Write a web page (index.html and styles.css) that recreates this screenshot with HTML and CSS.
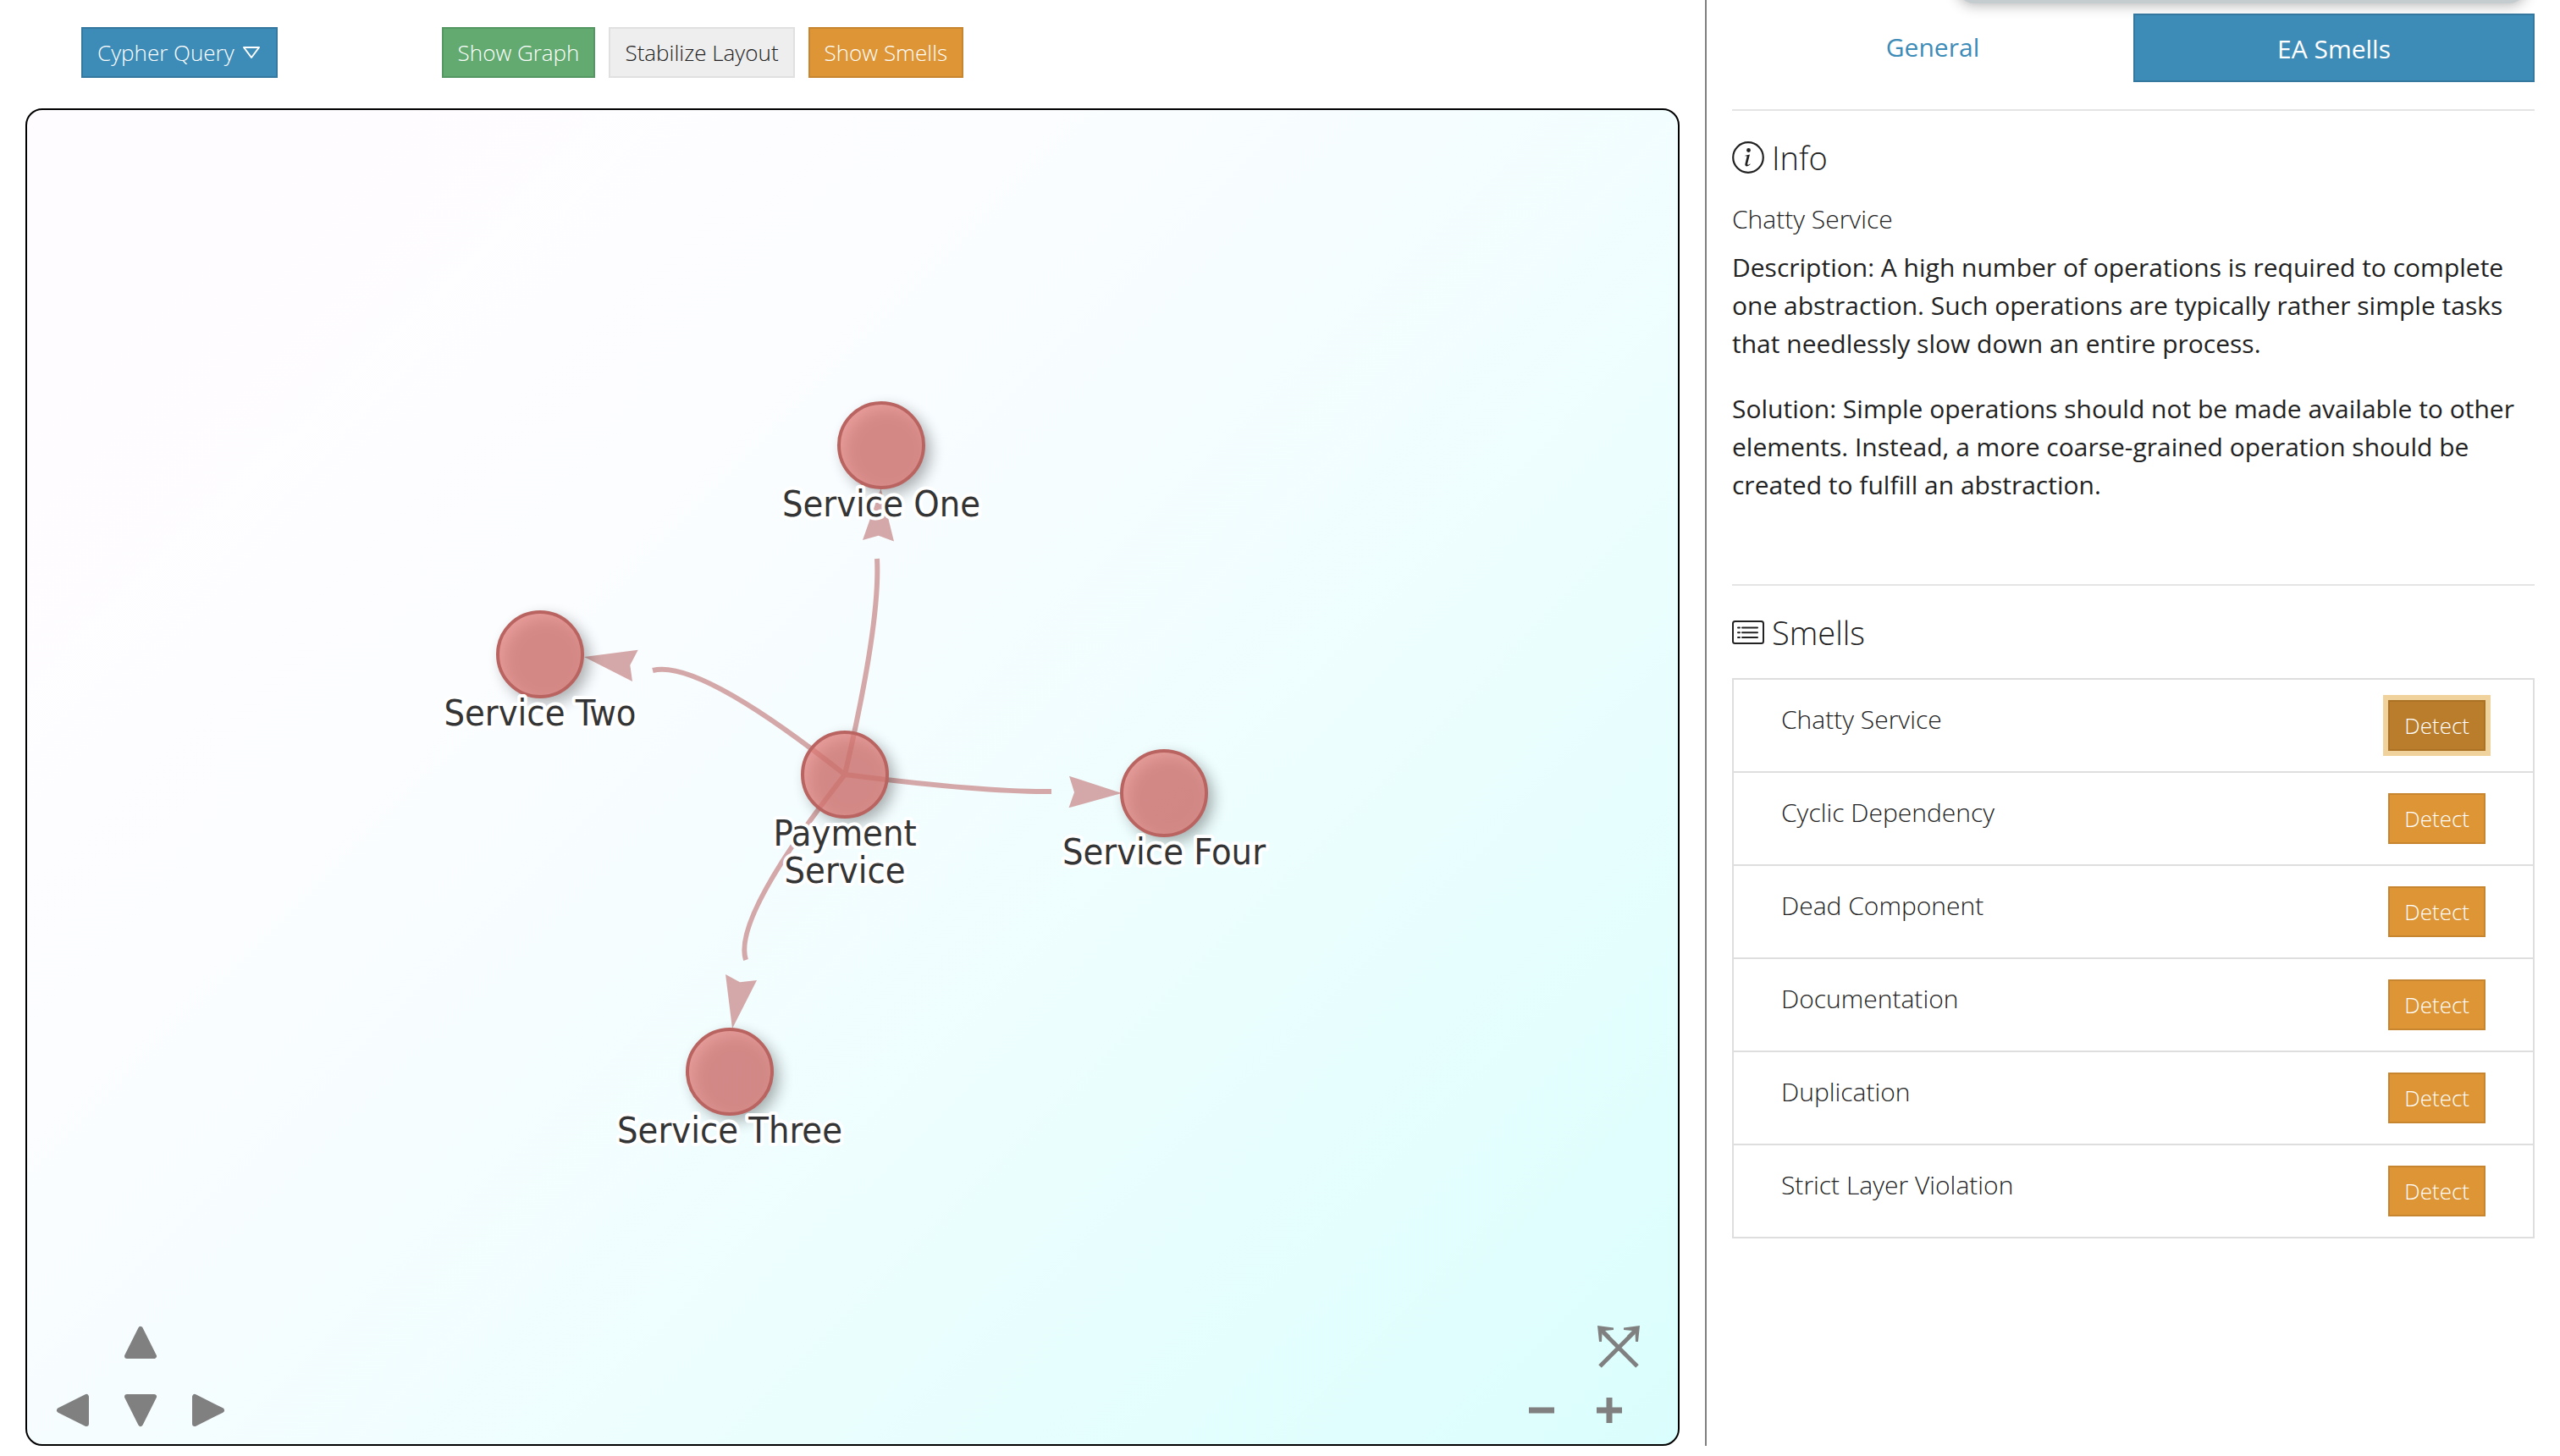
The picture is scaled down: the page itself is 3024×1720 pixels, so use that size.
FILE: index.html
```html
<!DOCTYPE html>
<html lang="en">
<head>
<meta charset="utf-8">
<title>EA Smells</title>
<link rel="stylesheet" href="styles.css">
</head>
<body>
<div class="layout">
  <main class="workspace">
    <div class="toolbar">
      <button class="btn btn-primary" type="button">Cypher Query
        <svg class="caret" viewBox="0 0 20 18" aria-hidden="true"><path d="M1 3h18L10 15z" fill="none" stroke="currentColor" stroke-width="2" stroke-linejoin="round"/></svg>
      </button>
      <div class="toolbar-group">
        <button class="btn btn-success" type="button">Show Graph</button>
        <button class="btn btn-light" type="button">Stabilize Layout</button>
        <button class="btn btn-warning" type="button">Show Smells</button>
      </div>
    </div>
    <section class="graph" aria-label="Service graph">
      <svg class="network" viewBox="32 130 1950 1576">
        <defs>
          <filter id="soft" x="-50%" y="-50%" width="200%" height="200%"><feGaussianBlur stdDeviation="9"/></filter>
          <g id="node">
            <circle class="node-shadow" cx="7" cy="7" r="51" filter="url(#soft)"/>
            <circle class="node-body" r="50"/>
          </g>
        </defs>
        <g class="edges">
          <path d="M998 915Q1040 735 1036 660"/>
          <path d="M998 915Q825 778 771 792"/>
          <path d="M998 915Q865 1085 881 1134"/>
          <path d="M998 915Q1160 936 1242 935"/>
        </g>
        <g class="arrows">
          <path d="M1040.500 577L1056 639.500L1037.700 632.700L1019 638z"/>
          <path d="M690 776L753.700 767.700L744.300 785.700L747 805z"/>
          <path d="M865 1215L857 1151L874 1160.300L894 1158z"/>
          <path d="M1325 937L1263 916.700L1269 936L1262.500 954.300z"/>
        </g>
        <use href="#node" x="998" y="915"/>
        <use href="#node" x="1041" y="526"/>
        <use href="#node" x="638" y="773"/>
        <use href="#node" x="862" y="1266"/>
        <use href="#node" x="1375" y="937"/>
        <g class="labels">
          <text x="1041" y="610">Service One</text>
          <text x="638" y="857">Service Two</text>
          <text x="862" y="1350">Service Three</text>
          <text x="1375" y="1021">Service Four</text>
          <text x="998" y="999">Payment<tspan x="998" dy="44">Service</tspan></text>
        </g>
      </svg>
      <div class="pan">
        <button class="nav nav-up" type="button" aria-label="Move up"><svg viewBox="0 0 40 40"><path d="M20 4L36 36H4z"/></svg></button>
        <button class="nav" type="button" aria-label="Move left"><svg viewBox="0 0 40 40"><path d="M4 20L36 4V36z"/></svg></button>
        <button class="nav" type="button" aria-label="Move down"><svg viewBox="0 0 40 40"><path d="M20 36L36 4H4z"/></svg></button>
        <button class="nav" type="button" aria-label="Move right"><svg viewBox="0 0 40 40"><path d="M36 20L4 4V36z"/></svg></button>
      </div>
      <div class="zoom">
        <button class="nav nav-fit" type="button" aria-label="Fit graph"><svg viewBox="0 0 50 50"><path class="shaft" d="M3 48L43 8M47 48L7 8"/><path class="head" d="M0 0L19 2.500V5L9 6L15 12L12 15L5.500 9L5 19H2zM50 0L31 2.500V5L41 6L35 12L38 15L44.500 9L45 19H48z"/></svg></button>
        <button class="nav" type="button" aria-label="Zoom out"><svg viewBox="0 0 40 40"><path class="flat" d="M5 16.500h30v7H5z"/></svg></button>
        <button class="nav" type="button" aria-label="Zoom in"><svg viewBox="0 0 40 40"><path class="flat" d="M5 16.500h11.500V5h7v11.500H35v7H23.500V35h-7V23.500H5z"/></svg></button>
      </div>
    </section>
  </main>
  <aside class="panel">
    <div class="popover-edge"></div>
    <nav class="tabs">
      <a class="tab" href="#general">General</a>
      <a class="tab tab-active" href="#smells">EA Smells</a>
    </nav>
    <section class="block info" id="general">
      <h2 class="heading"><svg class="icon" viewBox="0 0 38 38" aria-hidden="true"><circle cx="19" cy="19" r="17.800" fill="none" stroke="currentColor" stroke-width="2.200"/><circle cx="19.500" cy="10.500" r="2.400" fill="currentColor"/><path d="M15.500 16.800L21 15.600L18.300 26c-.5 2 .8 2.200 3 .4l.4.700c-3 3.200-7.200 3.200-6.200-.8l2-8.300c.2-.9-.3-.8-2-.5z" fill="currentColor"/></svg>Info</h2>
      <h3 class="subheading">Chatty Service</h3>
      <p>Description: A high number of operations is required to complete one abstraction. Such operations are typically rather simple tasks that needlessly slow down an entire process.</p>
      <p>Solution: Simple operations should not be made available to other elements. Instead, a more coarse-grained operation should be created to fulfill an abstraction.</p>
    </section>
    <section class="block" id="smells">
      <h2 class="heading"><svg class="icon" viewBox="0 0 38 38" aria-hidden="true"><rect x="1" y="6" width="36" height="26" rx="2.500" fill="none" stroke="currentColor" stroke-width="2"/><path d="M12 13.500h18M12 19.200h18M12 25h18M7 13.500h2M7 19.200h2M7 25h2" stroke="currentColor" stroke-width="2" stroke-linecap="round"/></svg>Smells</h2>
      <ul class="smells">
        <li>Chatty Service <button class="btn btn-warning btn-current" type="button">Detect</button></li>
        <li>Cyclic Dependency <button class="btn btn-warning" type="button">Detect</button></li>
        <li>Dead Component <button class="btn btn-warning" type="button">Detect</button></li>
        <li>Documentation <button class="btn btn-warning" type="button">Detect</button></li>
        <li>Duplication <button class="btn btn-warning" type="button">Detect</button></li>
        <li>Strict Layer Violation <button class="btn btn-warning" type="button">Detect</button></li>
      </ul>
    </section>
  </aside>
</div>
</body>
</html>
```
FILE: styles.css
```css
* { box-sizing: border-box; }

body {
  margin: 0;
  background: #fff;
  color: #222;
  font: 400 30px/45px "Open Sans", sans-serif;
}

.layout {
  display: grid;
  grid-template-columns: 2fr 1fr;
}

/* Left side: toolbar and graph */
.workspace {
  padding: 32px 30px 0;
  border-right: 2px solid #808080;
}

.toolbar {
  display: flex;
  gap: 194px;
  padding-left: 66px;
  margin-bottom: 36px;
}

.toolbar-group {
  display: flex;
  gap: 16px;
}

.btn {
  display: inline-flex;
  align-items: center;
  gap: 10px;
  height: 60px;
  padding: 0 17px;
  border: 2px solid;
  border-radius: 0;
  font: 300 26px/40px "Open Sans", sans-serif;
  white-space: nowrap;
}

.btn-primary { background: #3d8bb7; border-color: #34789f; color: #fff; }
.btn-success { background: #62aa70; border-color: #549762; color: #fff; }
.btn-light { background: #eee; border-color: #e0e0e0; color: #222; }
.btn-warning { background: #dd9535; border-color: #c6852e; color: #fff; }
.btn-current {
  background: #b97d2b;
  border-color: #ab7225;
  box-shadow: 0 0 0 6px #f0d29c;
}

.caret { width: 20px; height: 18px; margin-right: 2px; }

.graph {
  position: relative;
  overflow: hidden;
  border: 2px solid #000;
  border-radius: 20px;
  background: linear-gradient(135deg, #fffcff 10%, #fcfdff 32%, #f5fdff 48%, #edfefe 65%, #dafefd);
}

.network { display: block; width: 100%; }

.edges path { fill: none; stroke: #d4a8a8; stroke-width: 6; }
.arrows path { fill: #d4a8a8; }
.node-shadow { fill: #000; opacity: 0.32; }
.node-body { fill: #e27c78; fill-opacity: 0.74; stroke: #b96461; stroke-width: 4; }

.labels {
  fill: #343434;
  stroke: #fff;
  stroke-width: 8;
  stroke-linejoin: round;
  paint-order: stroke;
  text-anchor: middle;
  font-family: "DejaVu Sans Condensed", "DejaVu Sans", sans-serif;
  font-size: 43px;
}

/* Controls that float over the graph */
.pan,
.zoom {
  position: absolute;
  bottom: 6px;
  display: grid;
  gap: 12px;
}

.pan { left: 20px; grid-template-columns: repeat(3, 68px); }
.zoom { right: 25px; grid-template-columns: 68px 90px; }

.nav {
  display: flex;
  align-items: center;
  justify-content: center;
  width: 68px;
  height: 68px;
  padding: 0;
  border: 0;
  background: none;
}

.nav svg { width: 40px; height: 40px; fill: #808080; }
.nav path { stroke: #808080; stroke-width: 6; stroke-linejoin: round; }
.nav .flat, .nav .head { stroke: none; }
.nav .shaft { stroke-width: 5; }
.nav-up { grid-column: 2; }
.nav-up + .nav { grid-column: 1; }
.nav-fit { grid-column: 2; width: 90px; padding-top: 10px; }
.nav-fit svg { width: 50px; height: 50px; }

/* Right side panel */
.panel {
  position: relative;
  padding: 16px 30px;
}

.popover-edge {
  position: absolute;
  top: -36px;
  left: 296px;
  right: 40px;
  height: 40px;
  border-radius: 20px;
  background: #c5cccf;
  box-shadow: 0 2px 16px rgba(0, 0, 0, 0.3);
}

.tabs {
  position: relative;
  display: grid;
  grid-template-columns: 1fr 1fr;
  margin-bottom: 32px;
}

.tab {
  padding: 17px 0 19px;
  color: #3d8bb7;
  text-align: center;
  text-decoration: none;
}

.tab-active {
  padding: 17px 0 15px;
  border: 2px solid #34789f;
  background: #3d8bb7;
  color: #fff;
}

.block {
  border-top: 2px solid #e4e4e4;
  padding-top: 26px;
}

.info { min-height: 561px; }

.heading {
  display: flex;
  align-items: center;
  gap: 9px;
  margin: 0 0 25px;
  font-size: 38px;
  font-weight: 300;
  line-height: 58px;
}

.info .heading { margin-bottom: 21px; }

.icon { width: 38px; height: 38px; }

.subheading {
  margin: 0 0 12px;
  font-size: 30px;
  font-weight: 300;
  line-height: 45px;
}

p { margin: 0 0 32px; }

.smells {
  margin: 0;
  padding: 0;
  border: 2px solid #dedede;
  list-style: none;
  font-weight: 300;
}

.smells li {
  display: flex;
  align-items: flex-start;
  justify-content: space-between;
  padding: 24px 56px;
}

.smells li + li { border-top: 2px solid #dedede; }
```
